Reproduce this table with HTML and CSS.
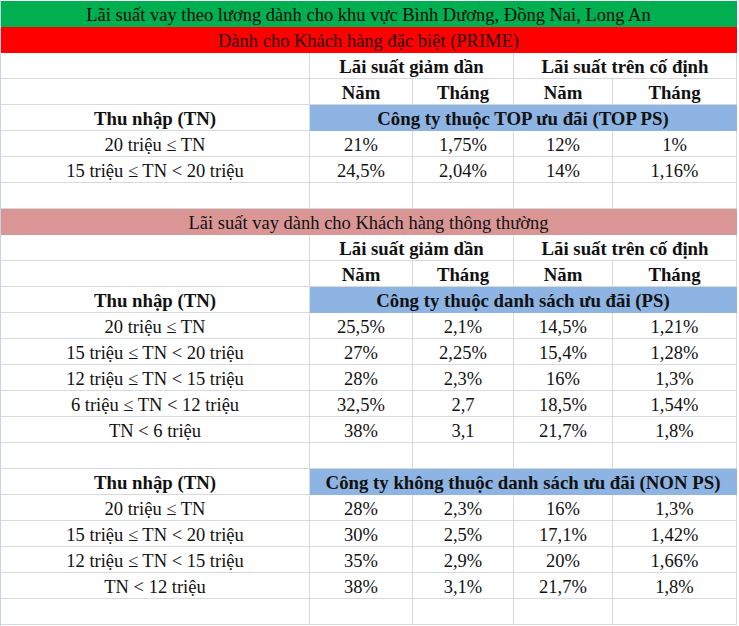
FILE: index.html
```html
<!DOCTYPE html>
<html lang="vi">
<head>
<meta charset="utf-8">
<title>Lãi suất vay theo lương</title>
<link rel="stylesheet" href="styles.css">
</head>
<body>
<div class="page">
  <div class="sheet">
    <div class="c band title">Lãi suất vay theo lương dành cho khu vực Bình Dương, Đồng Nai, Long An</div>
    <div class="c band prime">Dành cho Khách hàng đặc biệt (PRIME)</div>

    <div class="c"></div>
    <div class="c b s2">Lãi suất giảm dần</div>
    <div class="c b s2">Lãi suất trên cố định</div>

    <div class="c"></div>
    <div class="c b">Năm</div><div class="c b">Tháng</div><div class="c b">Năm</div><div class="c b">Tháng</div>

    <div class="c b">Thu nhập (TN)</div>
    <div class="c b sub">Công ty thuộc TOP ưu đãi (TOP PS)</div>

    <div class="c">20 triệu ≤ TN</div><div class="c">21%</div><div class="c">1,75%</div><div class="c">12%</div><div class="c">1%</div>
    <div class="c">15 triệu ≤ TN &lt; 20 triệu</div><div class="c">24,5%</div><div class="c">2,04%</div><div class="c">14%</div><div class="c">1,16%</div>
    <div class="c"></div><div class="c"></div><div class="c"></div><div class="c"></div><div class="c"></div>

    <div class="c band normal">Lãi suất vay dành cho Khách hàng thông thường</div>

    <div class="c"></div>
    <div class="c b s2">Lãi suất giảm dần</div>
    <div class="c b s2">Lãi suất trên cố định</div>

    <div class="c"></div>
    <div class="c b">Năm</div><div class="c b">Tháng</div><div class="c b">Năm</div><div class="c b">Tháng</div>

    <div class="c b">Thu nhập (TN)</div>
    <div class="c b sub">Công ty thuộc danh sách ưu đãi (PS)</div>

    <div class="c">20 triệu ≤ TN</div><div class="c">25,5%</div><div class="c">2,1%</div><div class="c">14,5%</div><div class="c">1,21%</div>
    <div class="c">15 triệu ≤ TN &lt; 20 triệu</div><div class="c">27%</div><div class="c">2,25%</div><div class="c">15,4%</div><div class="c">1,28%</div>
    <div class="c">12 triệu ≤ TN &lt; 15 triệu</div><div class="c">28%</div><div class="c">2,3%</div><div class="c">16%</div><div class="c">1,3%</div>
    <div class="c">6 triệu ≤ TN &lt; 12 triệu</div><div class="c">32,5%</div><div class="c">2,7</div><div class="c">18,5%</div><div class="c">1,54%</div>
    <div class="c">TN &lt; 6 triệu</div><div class="c">38%</div><div class="c">3,1</div><div class="c">21,7%</div><div class="c">1,8%</div>
    <div class="c"></div><div class="c"></div><div class="c"></div><div class="c"></div><div class="c"></div>

    <div class="c b">Thu nhập (TN)</div>
    <div class="c b sub">Công ty không thuộc danh sách ưu đãi (NON PS)</div>

    <div class="c">20 triệu ≤ TN</div><div class="c">28%</div><div class="c">2,3%</div><div class="c">16%</div><div class="c">1,3%</div>
    <div class="c">15 triệu ≤ TN &lt; 20 triệu</div><div class="c">30%</div><div class="c">2,5%</div><div class="c">17,1%</div><div class="c">1,42%</div>
    <div class="c">12 triệu ≤ TN &lt; 15 triệu</div><div class="c">35%</div><div class="c">2,9%</div><div class="c">20%</div><div class="c">1,66%</div>
    <div class="c">TN &lt; 12 triệu</div><div class="c">38%</div><div class="c">3,1%</div><div class="c">21,7%</div><div class="c">1,8%</div>
    <div class="c"></div><div class="c"></div><div class="c"></div><div class="c"></div><div class="c"></div>
  </div>
</div>
</body>
</html>
```
FILE: styles.css
```css
html, body {
  margin: 0;
  padding: 0;
  background: #ffffff;
}

.page {
  width: 738px;
  height: 626px;
  padding-top: 1px;
  box-sizing: border-box;
  border-left: 1px solid #c2d4ec;
  overflow: hidden;
}

.sheet {
  display: grid;
  grid-template-columns: 309px 103px 101px 99px 124px;
  grid-auto-rows: 26px;
  font-family: "Liberation Serif", "Times New Roman", serif;
  font-size: 18.5px;
  color: #111111;
}

.c {
  box-sizing: border-box;
  border-right: 1px solid #d6d9de;
  border-bottom: 1px solid #d6d9de;
  display: flex;
  align-items: center;
  justify-content: center;
  padding-top: 4px;
  white-space: nowrap;
  line-height: 1;
}

.b {
  font-weight: bold;
  font-size: 18.8px;
}

.s2 {
  grid-column: span 2;
}

.band {
  grid-column: 1 / -1;
  border-color: transparent;
}

.title {
  background: #00b050;
  color: #0a0a0a;
  border-bottom-color: #00b050;
}

.prime {
  background: #ff0000;
  color: #2a0000;
  border-bottom-color: #ff0000;
}

.normal {
  background: #da9694;
  color: #111111;
  border-bottom-color: #da9694;
}

.sub {
  grid-column: 2 / -1;
  background: #8db4e2;
  border-color: #8db4e2;
}
```
